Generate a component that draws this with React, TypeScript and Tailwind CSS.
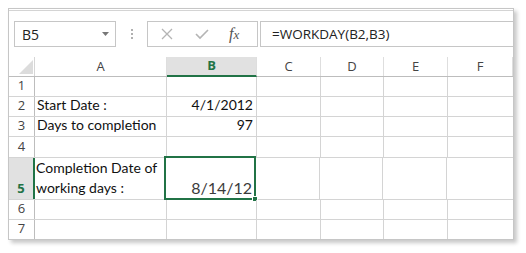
import React from "react";

const cols = ["A", "B", "C", "D", "E", "F"];
const colW = ["w-[132px]", "w-[90px]", "w-[64px]", "w-[63px]", "w-[64px]", "w-[65px]"];

type Row = { n: number; h: string; a?: React.ReactNode; b?: React.ReactNode; active?: boolean };

const rows: Row[] = [
  { n: 1, h: "h-[20px]" },
  { n: 2, h: "h-[20px]", a: "Start Date :", b: "4/1/2012" },
  { n: 3, h: "h-[20px]", a: "Days to completion", b: "97" },
  { n: 4, h: "h-[21px]" },
  {
    n: 5,
    h: "h-[42px]",
    a: (
      <>
        Completion Date of
        <br />
        working days :
      </>
    ),
    b: <span className="text-[16px] text-[#3b3b3b]">8/14/12</span>,
    active: true,
  },
  { n: 6, h: "h-[20px]" },
  { n: 7, h: "h-[19px]" },
];

function FormulaBar() {
  return (
    <div className="flex items-center h-[26px] mt-[10px] mb-[10px] pl-[5px]">
      <div className="w-[102px] h-[26px] border border-[#c6c6c6] flex items-center justify-between pl-[7px] pr-[6px]">
        <span className="text-[14px] text-[#222] font-['Open_Sans',sans-serif]">B5</span>
        <svg width="7" height="4" viewBox="0 0 7 4">
          <path d="M0 0 H7 L3.5 4 Z" fill="#777" />
        </svg>
      </div>
      <div className="w-[31px] flex flex-col items-center gap-[2px]">
        <div className="w-[2px] h-[2px] bg-[#b0b0b0]" />
        <div className="w-[2px] h-[2px] bg-[#b0b0b0]" />
        <div className="w-[2px] h-[2px] bg-[#b0b0b0]" />
      </div>
      <div className="w-[111px] h-[26px] border border-[#c6c6c6] flex items-center">
        <svg width="12" height="12" viewBox="0 0 12 12" className="ml-[13px]">
          <path d="M1 1 L11 11 M11 1 L1 11" stroke="#b4b4b4" strokeWidth="1.3" fill="none" />
        </svg>
        <svg width="14" height="12" viewBox="0 0 14 12" className="ml-[22px]">
          <path d="M1 6 L5 10 L13 2" stroke="#b4b4b4" strokeWidth="1.6" fill="none" />
        </svg>
        <span className="ml-[20px] text-[16px] leading-none italic text-[#555] font-['Liberation_Serif',serif]">
          f<span className="text-[13px]">x</span>
        </span>
      </div>
      <div className="flex-1 h-[26px] ml-[2px] border-y border-l border-[#c6c6c6] flex items-center pl-[11px]">
        <span className="text-[13.5px] text-[#222] font-['Open_Sans',sans-serif]">=WORKDAY(B2,B3)</span>
      </div>
    </div>
  );
}

function Sheet() {
  return (
    <div className="flex flex-col font-['Lato',sans-serif] text-[14px] text-[#111]">
      <div className="flex h-[20px] border-b border-[#bdbdbd]">
        <div className="w-[26px] border-r border-[#d6d6d6] flex items-end justify-end pr-[1px] pb-[2px]">
          <svg width="14" height="14" viewBox="0 0 14 14">
            <path d="M14 0 V14 H0 Z" fill="#dcdcdc" />
          </svg>
        </div>
        {cols.map((c, i) => (
          <div
            key={c}
            className={
              colW[i] +
              " flex items-center justify-center border-r border-[#dedede] text-[13px] font-['Open_Sans',sans-serif] " +
              (c === "B"
                ? "bg-[#e1e1e1] text-[#217346] font-bold border-b-2 border-b-[#217346] -mb-[1px]"
                : "text-[#444]")
            }
          >
            {c}
          </div>
        ))}
      </div>
      {rows.map((r, idx) => (
        <div key={r.n} className={"flex " + r.h + (idx < rows.length - 1 ? " border-b border-[#d4d4d4]" : "")}>
          <div
            className={
              "w-[26px] flex items-end justify-center pb-[1px] text-[13px] font-['Open_Sans',sans-serif] " +
              (r.active
                ? "bg-[#e1e1e1] text-[#217346] font-bold border-r-2 border-[#217346] -mr-[1px]"
                : "text-[#444] border-r border-[#bdbdbd]")
            }
          >
            {r.n}
          </div>
          <div className={colW[0] + " border-r border-[#d4d4d4] flex items-end pl-[2px] pb-[1px] leading-[20px]"}>
            <div>{r.a}</div>
          </div>
          <div className={colW[1] + " relative border-r border-[#d4d4d4] flex items-end justify-end pr-[3px] pb-[1px] leading-[20px]"}>
            {r.b}
            {r.active && (
              <div className="absolute -left-[2px] -top-[2px] -right-[1px] -bottom-[1px] border-2 border-[#217346]">
                <div className="absolute -right-[4px] -bottom-[4px] w-[6px] h-[6px] bg-[#217346] border border-white" />
              </div>
            )}
          </div>
          {colW.slice(2).map((w, i) => (
            <div key={i} className={w + (i < 3 ? " border-r border-[#d4d4d4]" : "")} />
          ))}
        </div>
      ))}
    </div>
  );
}

export default function App() {
  return (
    <div className="w-[526px] h-[253px] bg-white pt-[8px] pl-[8px]">
      <div className="w-[506px] h-[232px] bg-white border border-[#c6c6c6] shadow-[3px_3px_4px_rgba(0,0,0,0.22)] overflow-hidden">
        <div className="h-[1px]" />
        <div className="border-t border-[#d4d4d4]" />
        <FormulaBar />
        <Sheet />
      </div>
    </div>
  );
}
